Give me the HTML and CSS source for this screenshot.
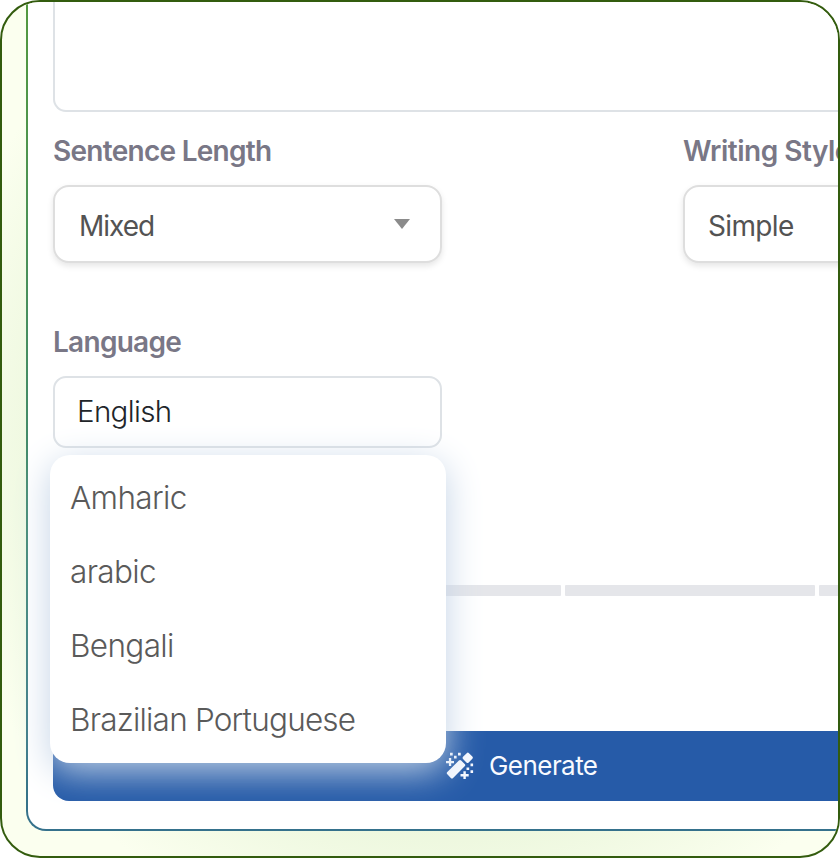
FILE: index.html
```html
<!DOCTYPE html>
<html lang="en">
<head>
    <meta charset="UTF-8">
    <meta name="viewport" content="width=device-width, initial-scale=1.0">
    <title>Generator</title>
    <link rel="stylesheet" href="styles.css">
</head>
<body>
    <div class="frame">
        <div class="panel">
            <div class="prompt-box"></div>

            <div class="fields">
                <div class="field">
                    <div class="label">Sentence Length</div>
                    <div class="select">
                        <span class="value-mixed">Mixed</span>
                        <svg class="arrow" viewBox="0 0 16 10"><path d="M0 0H16L8 10Z" fill="#8b8b8b"/></svg>
                    </div>
                </div>
                <div class="field">
                    <div class="label label-writing">Writing Style</div>
                    <div class="select select-style">
                        <span>Simple</span>
                    </div>
                </div>
            </div>

            <div class="language">
                <div class="label">Language</div>
                <div class="language-input">English</div>
                <ul class="dropdown">
                    <li>Amharic</li>
                    <li>arabic</li>
                    <li>Bengali</li>
                    <li class="item-long">Brazilian Portuguese</li>
                </ul>
            </div>

            <div class="steps">
                <div class="step"></div>
                <div class="step"></div>
                <div class="step"></div>
                <div class="step"></div>
            </div>

            <div class="generate">
                <svg class="wand" viewBox="0 0 28 28" fill="#f8faff">
                    <rect x="-4" y="-4.2" width="8" height="8.4" rx="1.6" transform="translate(21.7 5.8) rotate(45)"/>
                    <rect x="-4.1" y="-9.8" width="8.2" height="19.6" rx="1.6" transform="translate(10 17.2) rotate(45)"/>
                    <path d="M2.9 6h2.3v2.9H8v2.3H5.2V14H2.9v-2.800H0V8.900h2.900zM17.400 19.200h2.400v2.800h2.900v2.400h-2.900V27h-2.400v-2.600h-2.900V22h2.900z"/>
                    <path d="M4 .8h2.700v2.700H4zM12 .8h2.700v2.700H12zM8 3.800h2.600v2.600H8zM24.500 11.500h2.600v2.700h-2.600zM20.500 15.500h2.700v2.600h-2.700zM24.500 18.300h2.600V21h-2.600z"/>
                </svg>
                <span class="generate-text">Generate</span>
            </div>
        </div>
    </div>
</body>
</html>
```
FILE: styles.css
```css
body {
    margin: 0;
    background-color: #fff;
    font-family: Inter, "Liberation Sans", sans-serif;
}

.frame {
    box-sizing: border-box;
    width: 840px;
    height: 858px;
    border: 2px solid #335c0e;
    border-radius: 40px;
    overflow: hidden;
    background: radial-gradient(circle at 450px 430px, #ecf7dd 390px, #fbffef 530px);
}

/* runs past the right edge of the frame */
.panel {
    box-sizing: border-box;
    width: 1100px;
    height: 829px;
    margin-left: 24px;
    padding-left: 25px;
    border: 2px solid transparent;
    border-top: 0;
    border-bottom-left-radius: 20px;
    background: linear-gradient(#fff, #fff) padding-box, linear-gradient(#53993f, #3f8873 65%, #35718c) border-box;
}

.prompt-box {
    box-sizing: border-box;
    width: 1000px;
    height: 110px;
    border: 2px solid #dee2e6;
    border-top: 0;
    border-radius: 0 0 13px 13px;
}

.fields {
    display: flex;
    gap: 241px;
    padding-top: 22px;
}

.field {
    width: 389px;
}

.label {
    height: 34px;
    line-height: 34px;
    font-size: 28px;
    font-weight: 600;
    letter-spacing: -0.72px;
    color: #797786;
    white-space: nowrap;
}

.label-writing {
    letter-spacing: -0.5px;
}

.select {
    box-sizing: border-box;
    display: flex;
    align-items: center;
    justify-content: space-between;
    height: 78px;
    margin-top: 17px;
    padding: 3px 30px 0 24px;
    border: 2px solid #dedede;
    border-radius: 16px;
    background-color: #fff;
    box-shadow: 0 3px 6px rgba(0, 0, 0, 0.1);
    font-size: 28px;
    letter-spacing: -0.65px;
    color: #535353;
}

.select-style {
    padding-left: 23px;
}

.value-mixed {
    letter-spacing: -1px;
}

.arrow {
    width: 16px;
    height: 10px;
    margin-top: -3px;
}

.language {
    position: relative;
    width: 389px;
    margin-top: 62px;
}

.language-input {
    box-sizing: border-box;
    height: 72px;
    margin-top: 17px;
    padding-left: 22px;
    border: 2px solid #dee2e6;
    border-radius: 13px;
    line-height: 67px;
    font-size: 29.5px;
    font-weight: 300;
    letter-spacing: -0.65px;
    color: #212529;
}

.dropdown {
    position: absolute;
    top: 130px;
    left: -3px;
    z-index: 2;
    box-sizing: border-box;
    width: 396px;
    height: 308px;
    margin: 0;
    padding: 6px 20px;
    border-radius: 20px;
    background-color: #fff;
    box-shadow: 0 8px 36px #c3d3e6;
    list-style: none;
    font-size: 31.5px;
    font-weight: 300;
    letter-spacing: -0.65px;
    color: #5a5a5a;
}

.dropdown li {
    height: 74px;
    line-height: 74px;
    white-space: nowrap;
}

.item-long {
    letter-spacing: -0.8px;
}

.steps {
    display: flex;
    gap: 4px;
    margin-top: 137px;
    padding-left: 4px;
}

.step {
    flex: none;
    width: 250px;
    height: 11px;
    border-radius: 1px;
    background-color: #e5e6ea;
}

.generate {
    box-sizing: border-box;
    display: flex;
    align-items: center;
    gap: 15px;
    width: 1000px;
    height: 70px;
    margin-top: 135px;
    padding-left: 393px;
    border-radius: 16px;
    background-color: #265ba8;
    font-size: 26px;
    letter-spacing: -0.55px;
    color: #f8faff;
}

.generate-text {
    padding-bottom: 2px;
}

.wand {
    width: 28px;
    height: 28px;
}
```
